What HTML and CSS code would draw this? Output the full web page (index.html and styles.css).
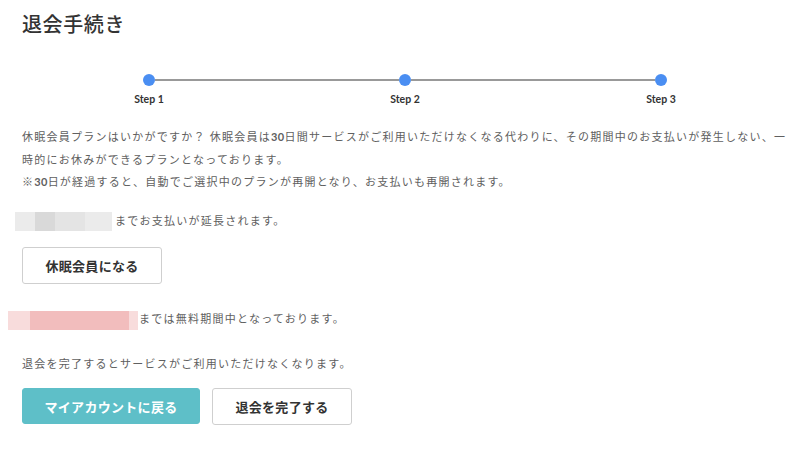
FILE: index.html
```html
<!DOCTYPE html>
<html lang="ja">
<head>
  <meta charset="UTF-8">
  <meta name="viewport" content="width=device-width, initial-scale=1.0">
  <title>退会手続き</title>
  <link rel="stylesheet" href="styles.css">
</head>
<body>
  <div class="page">
    <h1>退会手続き</h1>

    <div class="stepper">
      <div class="step"><span class="dot"></span><span class="step-label">Step 1</span></div>
      <div class="step-line"></div>
      <div class="step"><span class="dot"></span><span class="step-label">Step 2</span></div>
      <div class="step-line"></div>
      <div class="step"><span class="dot"></span><span class="step-label">Step 3</span></div>
    </div>

    <p class="lead">休眠会員プランはいかがですか？ 休眠会員は<b>30</b>日間サービスがご利用いただけなくなる代わりに、その期間中のお支払いが発生しない、一時的にお休みができるプランとなっております。<br>※<b>30</b>日が経過すると、自動でご選択中のプランが再開となり、お支払いも再開されます。</p>

    <p class="date-line"><span class="masked gray"></span>までお支払いが延長されます。</p>

    <button class="btn">休眠会員になる</button>

    <p class="date-line free"><span class="masked pink"></span>までは無料期間中となっております。</p>

    <p class="note">退会を完了するとサービスがご利用いただけなくなります。</p>

    <div class="actions">
      <button class="btn btn-primary">マイアカウントに戻る</button>
      <button class="btn">退会を完了する</button>
    </div>
  </div>
</body>
</html>
```

FILE: styles.css
```css
body {
  margin: 0;
  background: #fff;
  color: #606060;
  font-family: "Lato", "Noto Sans CJK JP", sans-serif;
}
.page {
  padding: 0 10px 0 22px;
}
h1 {
  margin: 10px 0 0;
  font-size: 20px;
  line-height: 28px;
  font-weight: 500;
  letter-spacing: 0.6px;
  color: #333;
}

/* steps */
.stepper {
  display: flex;
  width: 524px;
  margin: 36px 0 0 121px;
}
.step {
  width: 12px;
  display: flex;
  flex-direction: column;
  align-items: center;
}
.dot {
  width: 12px;
  height: 12px;
  border-radius: 50%;
  background: #4a8ef2;
}
.step-label {
  margin-top: 6px;
  font-size: 10.5px;
  line-height: 14px;
  font-weight: 700;
  color: #333;
  white-space: nowrap;
}
.step-line {
  flex: 1;
  height: 2px;
  margin-top: 5px;
  background: #999;
}

/* text */
.lead, .date-line, .note {
  margin: 0;
  font-size: 11px;
  line-height: 22.5px;
  letter-spacing: 1.25px;
}
.lead {
  margin-top: 20px;
}
.lead b {
  letter-spacing: 0.3px;
}
.date-line {
  margin-top: 16px;
}
.date-line.free {
  margin-top: 24px;
}
.masked {
  display: inline-block;
  height: 19px;
  vertical-align: middle;
  margin-right: 3px;
}
.masked.gray {
  width: 97px;
  margin-left: -7px;
  background: linear-gradient(90deg, #ebebeb 0 20px, #d9d9d9 20px 40px, #e4e4e4 40px 70px, #ebebeb 70px);
}
.masked.pink {
  width: 130px;
  margin-left: -14px;
  margin-right: 1px;
  background: linear-gradient(90deg, #f8dcdc 0 22px, #f2bdbd 22px 121px, #f8dcdc 121px);
}
.note {
  margin-top: 22px;
}

/* buttons */
.btn {
  display: block;
  width: 140px;
  height: 37px;
  margin-top: 15px;
  padding: 0;
  border: 1px solid #cfcfcf;
  border-radius: 3px;
  background: #fff;
  color: #333;
  font-family: inherit;
  font-size: 13px;
  font-weight: 700;
  letter-spacing: 0.3px;
  cursor: pointer;
}
.actions {
  display: flex;
  gap: 12px;
  margin-top: 13px;
}
.actions .btn {
  margin-top: 0;
}
.btn-primary {
  width: 178px;
  height: 36px;
  border-color: #5ebfc8;
  background: #5ebfc8;
  color: #fff;
}
```
